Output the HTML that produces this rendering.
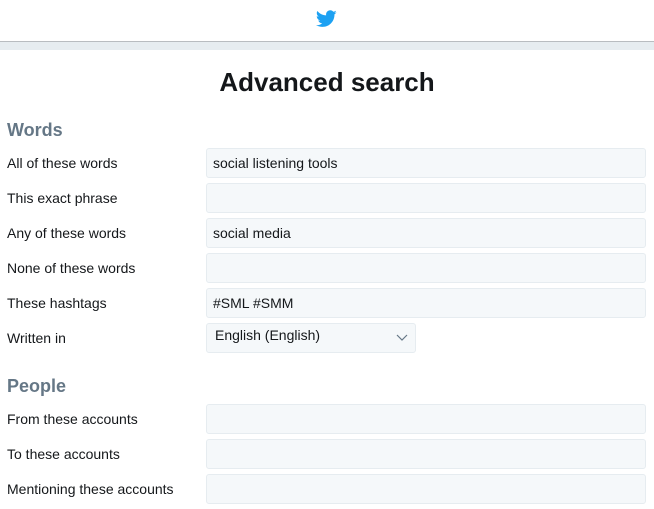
<!DOCTYPE html>
<html><head><style>
body{margin:0;width:654px;height:509px;overflow:hidden;background:#fff;font-family:"Liberation Sans",sans-serif;position:relative}
.hdr{position:absolute;left:0;top:0;width:654px;height:41px;background:#fff;border-bottom:1px solid #b8bcc0}
.band{position:absolute;left:0;top:42px;width:654px;height:8px;background:#e6ecf0}
h1{position:absolute;left:0;width:654px;top:67px;margin:0;text-align:center;font-size:26px;font-weight:bold;color:#14171a}
h2{position:absolute;left:7px;margin:0;font-size:18px;font-weight:bold;color:#657786}
.l{position:absolute;left:7px;font-size:14px;color:#14171a}
.i{position:absolute;left:206px;height:28px;background:#f5f8fa;border:1px solid #e6ecf0;border-radius:3px;font-size:14px;color:#14171a;line-height:28px;box-sizing:content-box;padding-left:6px;width:432px}
</style></head><body>
<div class="hdr"><svg style="position:absolute;left:316px;top:10px" width="21" height="18" viewBox="0 0 24 20"><path fill="#1da1f2" d="M23.6 2.4c-.9.4-1.8.6-2.8.8 1-.6 1.8-1.6 2.1-2.7-.9.6-2 1-3.1 1.2C19 .7 17.7 0 16.3 0c-2.7 0-4.8 2.2-4.8 4.8 0 .4 0 .8.1 1.1C7.5 5.7 3.9 3.8 1.6.9c-.4.7-.7 1.600-.7 2.4 0 1.7.9 3.2 2.2 4-.8 0-1.5-.2-2.2-.6v.1c0 2.3 1.7 4.3 3.9 4.7-.4.1-.8.2-1.300.2-.3 0-.6 0-.9-.1.6 1.9 2.4 3.3 4.5 3.4-1.7 1.3-3.7 2.1-6 2.1-.4 0-.8 0-1.200-.1C2.1 18.3 4.7 19 7.4 19c8.9 0 13.7-7.4 13.7-13.7v-.6c.9-.7 1.8-1.5 2.5-2.3z"/></svg></div>
<div class="band"></div>
<h1>Advanced search</h1>
<h2 style="top:120px">Words</h2>
<div class="l" style="top:155px">All of these words</div><div class="i" style="top:148px">social listening tools</div>
<div class="l" style="top:190px">This exact phrase</div><div class="i" style="top:183px"></div>
<div class="l" style="top:225px">Any of these words</div><div class="i" style="top:218px">social media</div>
<div class="l" style="top:260px">None of these words</div><div class="i" style="top:253px"></div>
<div class="l" style="top:295px">These hashtags</div><div class="i" style="top:288px">#SML #SMM</div>
<div class="l" style="top:330px">Written in</div>
<div class="i" style="top:323px;width:200px;padding-left:8px;line-height:22px">English (English)<svg style="position:absolute;left:189px;top:10px" width="12" height="8" viewBox="0 0 12 8"><path d="M1 1l5 5 5-5" fill="none" stroke="#657786" stroke-width="1.2"/></svg></div>
<h2 style="top:376px">People</h2>
<div class="l" style="top:411px">From these accounts</div><div class="i" style="top:404px"></div>
<div class="l" style="top:446px">To these accounts</div><div class="i" style="top:439px"></div>
<div class="l" style="top:481px">Mentioning these accounts</div><div class="i" style="top:474px"></div>
</body></html>
